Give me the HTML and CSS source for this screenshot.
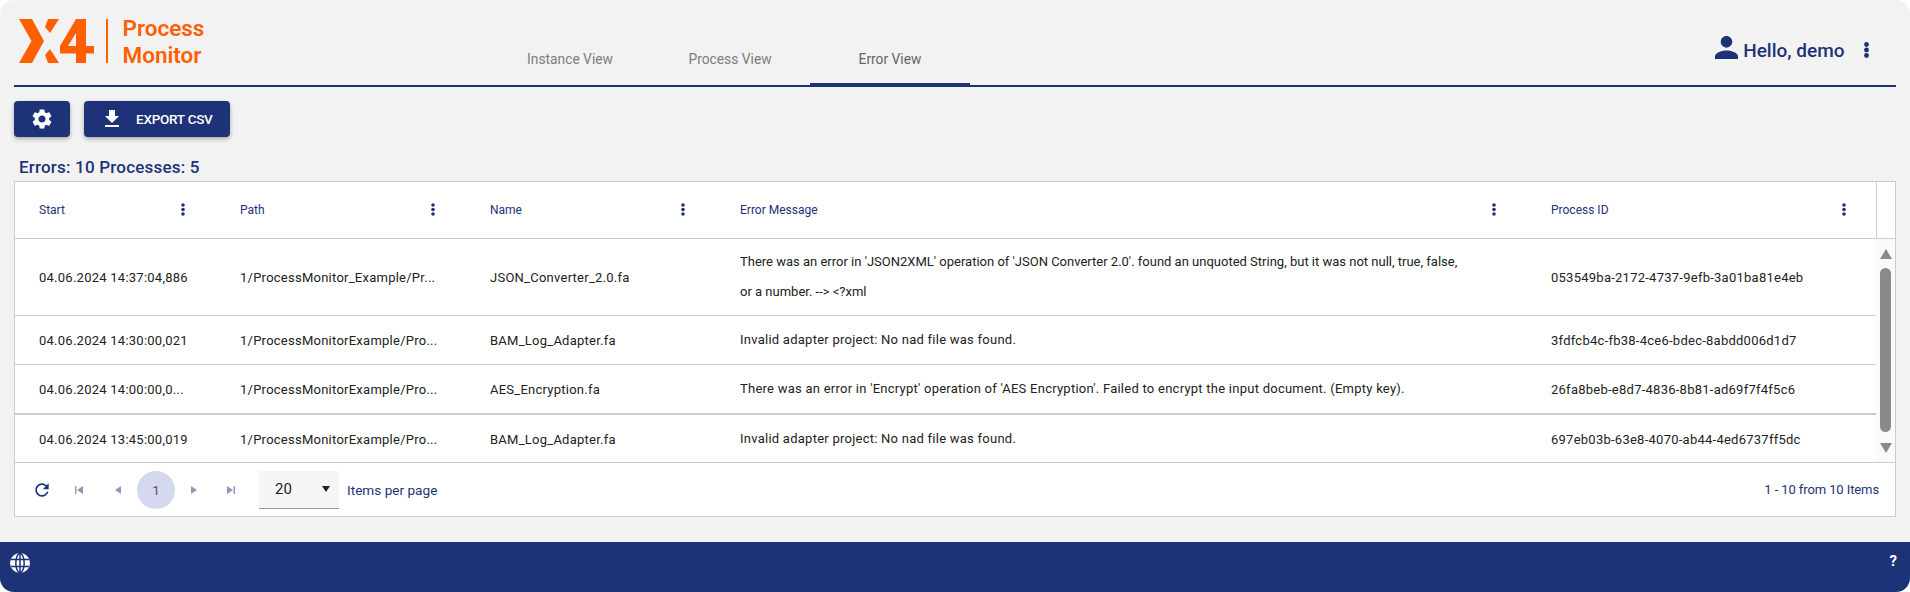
FILE: index.html
```html
<!DOCTYPE html>
<html lang="en">
<head>
<meta charset="utf-8">
<title>Process Monitor</title>
<link rel="stylesheet" href="styles.css">
</head>
<body>
<svg class="defs" width="0" height="0" aria-hidden="true">
  <symbol id="kebab" viewBox="0 0 4 13"><circle cx="2" cy="2" r="1.800"/><circle cx="2" cy="6.500" r="1.800"/><circle cx="2" cy="11" r="1.800"/></symbol>
  <symbol id="kebab-lg" viewBox="0 0 5 16"><circle cx="2.500" cy="2.500" r="2.400"/><circle cx="2.500" cy="8" r="2.400"/><circle cx="2.500" cy="13.500" r="2.400"/></symbol>
</svg>
<div class="app">
  <main class="content">
    <header class="topbar">
      <div class="brand">
        <svg class="logo" viewBox="0 0 76 44" aria-label="X4">
          <path d="M0 0H13L25 22 13 44H0L12.500 22Z"/>
          <path d="M29 0H40L31 14 26 8ZM26 36 31 30 40 44H29Z"/>
          <path d="M57 0H67V27H75V34.500H67V44H57V34.500H41V27ZM57 14 49 27H57Z" fill-rule="evenodd"/>
        </svg>
        <span class="brand-rule"></span>
        <div class="brand-name"><span>Process</span><span>Monitor</span></div>
      </div>
      <nav class="tabs">
        <a class="tab">Instance View</a>
        <a class="tab">Process View</a>
        <a class="tab active">Error View</a>
      </nav>
      <div class="user">
        <svg class="user-icon" viewBox="4 4 16 16"><path d="M12 12c2.210 0 4-1.790 4-4s-1.790-4-4-4-4 1.790-4 4 1.790 4 4 4zm0 2c-2.670 0-8 1.340-8 4v2h16v-2c0-2.660-5.330-4-8-4z"/></svg>
        <span class="user-name">Hello, demo</span>
        <svg class="kebab-lg"><use href="#kebab-lg"/></svg>
      </div>
    </header>

    <div class="toolbar">
      <button class="btn btn-icon">
        <svg viewBox="0 0 24 24"><path d="M19.140 12.940c.04-.3.06-.61.06-.94 0-.32-.02-.64-.07-.94l2.030-1.580c.18-.14.23-.41.12-.61l-1.920-3.320c-.12-.22-.37-.29-.59-.22l-2.390.96c-.5-.38-1.030-.7-1.620-.94l-.36-2.540c-.04-.24-.24-.41-.48-.41h-3.840c-.24 0-.43.17-.47.41l-.36 2.540c-.59.24-1.130.57-1.620.94l-2.390-.96c-.22-.08-.47 0-.59.22L2.740 8.870c-.12.21-.08.47.12.61l2.030 1.580c-.05.3-.09.63-.09.94s.02.64.07.94l-2.030 1.580c-.18.14-.23.41-.12.61l1.920 3.320c.12.22.37.29.59.22l2.390-.96c.5.38 1.030.7 1.620.94l.36 2.540c.05.24.24.41.48.41h3.840c.24 0 .44-.17.47-.41l.36-2.540c.59-.24 1.130-.56 1.620-.94l2.390.96c.22.08.47 0 .59-.22l1.920-3.320c.12-.22.07-.47-.12-.61l-2.010-1.580zM12 15.600c-1.980 0-3.600-1.620-3.600-3.600s1.620-3.600 3.600-3.600 3.600 1.620 3.600 3.600-1.620 3.600-3.600 3.600z"/></svg>
      </button>
      <button class="btn btn-export">
        <svg viewBox="0 0 24 24"><path d="M19 9h-4V3H9v6H5l7 7 7-7zM5 18v2h14v-2H5z"/></svg>
        <span>EXPORT CSV</span>
      </button>
    </div>

    <div class="summary">Errors: 10 Processes: 5</div>

    <section class="grid">
      <div class="grid-head">
        <div class="row head-row">
          <div class="cell"><span>Start</span><svg class="kebab"><use href="#kebab"/></svg></div>
          <div class="cell"><span>Path</span><svg class="kebab"><use href="#kebab"/></svg></div>
          <div class="cell"><span>Name</span><svg class="kebab"><use href="#kebab"/></svg></div>
          <div class="cell"><span>Error Message</span><svg class="kebab"><use href="#kebab"/></svg></div>
          <div class="cell"><span>Process ID</span><svg class="kebab"><use href="#kebab"/></svg></div>
        </div>
        <div class="gutter"></div>
      </div>
      <div class="grid-body">
        <div class="rows">
          <div class="row data-row r1">
            <div class="cell"><span class="clip">04.06.2024 14:37:04,886</span></div>
            <div class="cell"><span class="clip">1/ProcessMonitor_Example/Pr...</span></div>
            <div class="cell"><span class="clip">JSON_Converter_2.0.fa</span></div>
            <div class="cell msg">There was an error in 'JSON2XML' operation of 'JSON Converter 2.0'. found an unquoted String, but it was not null, true, false,<br>or a number. --&gt; &lt;?xml</div>
            <div class="cell"><span class="clip">053549ba-2172-4737-9efb-3a01ba81e4eb</span></div>
          </div>
          <div class="row data-row r2">
            <div class="cell"><span class="clip">04.06.2024 14:30:00,021</span></div>
            <div class="cell"><span class="clip">1/ProcessMonitorExample/Pro...</span></div>
            <div class="cell"><span class="clip">BAM_Log_Adapter.fa</span></div>
            <div class="cell msg">Invalid adapter project: No nad file was found.</div>
            <div class="cell"><span class="clip">3fdfcb4c-fb38-4ce6-bdec-8abdd006d1d7</span></div>
          </div>
          <div class="row data-row r3">
            <div class="cell"><span class="clip">04.06.2024 14:00:00,0...</span></div>
            <div class="cell"><span class="clip">1/ProcessMonitorExample/Pro...</span></div>
            <div class="cell"><span class="clip">AES_Encryption.fa</span></div>
            <div class="cell msg">There was an error in 'Encrypt' operation of 'AES Encryption'. Failed to encrypt the input document. (Empty key).</div>
            <div class="cell"><span class="clip">26fa8beb-e8d7-4836-8b81-ad69f7f4f5c6</span></div>
          </div>
          <div class="row data-row r4">
            <div class="cell"><span class="clip">04.06.2024 13:45:00,019</span></div>
            <div class="cell"><span class="clip">1/ProcessMonitorExample/Pro...</span></div>
            <div class="cell"><span class="clip">BAM_Log_Adapter.fa</span></div>
            <div class="cell msg">Invalid adapter project: No nad file was found.</div>
            <div class="cell"><span class="clip">697eb03b-63e8-4070-ab44-4ed6737ff5dc</span></div>
          </div>
        </div>
        <div class="scrollbar">
          <span class="arrow-up"></span>
          <span class="thumb"></span>
          <span class="arrow-down"></span>
        </div>
      </div>
      <div class="pager">
        <svg class="refresh" viewBox="0 0 24 24"><path d="M17.650 6.350C16.200 4.900 14.210 4 12 4c-4.420 0-7.990 3.580-7.990 8s3.570 8 7.990 8c3.730 0 6.840-2.550 7.730-6h-2.080c-.82 2.330-3.040 4-5.650 4-3.310 0-6-2.690-6-6s2.690-6 6-6c1.660 0 3.140.69 4.220 1.780L13 11h7V4l-2.350 2.350z"/></svg>
        <svg class="nav" viewBox="0 0 8 8"><path d="M0 0H1.400V8H0ZM8 0V8L2 4Z"/></svg>
        <svg class="nav" viewBox="0 0 8 8"><path d="M7 0V8L1 4Z"/></svg>
        <span class="page">1</span>
        <svg class="nav" viewBox="0 0 8 8"><path d="M1 0V8L7 4Z"/></svg>
        <svg class="nav" viewBox="0 0 8 8"><path d="M0 0V8L6 4ZM6.600 0H8V8H6.600Z"/></svg>
        <div class="select"><span>20</span><i class="caret"></i></div>
        <span class="per-page">Items per page</span>
        <span class="count">1 - 10 from 10 Items</span>
      </div>
    </section>
  </main>
  <footer class="footer">
    <svg class="globe" viewBox="0 0 20 20"><circle cx="10" cy="10" r="10" fill="#fff"/><g fill="none" stroke="#1e3278" stroke-width="1.500"><ellipse cx="10" cy="10" rx="4.200" ry="9.500"/><path d="M10 0V20M1 6.500H19M1 13.500H19"/></g></svg>
    <span class="help">?</span>
  </footer>
</div>
</body>
</html>
```
FILE: styles.css
```css
* { box-sizing: border-box; }
html, body { margin: 0; height: 100%; background: #fff; overflow: hidden; }
body { font-family: Roboto, "Liberation Sans", sans-serif; color: #1e3278; }
.defs { position: absolute; }

.app {
  height: 592px;
  display: flex;
  flex-direction: column;
  background: #f2f2f2;
  border-radius: 14px;
  overflow: hidden;
}
.content { flex: 1; min-height: 0; padding: 0 14px; }

/* top bar */
.topbar {
  height: 87px;
  display: flex;
  border-bottom: 2px solid #1e3278;
  position: relative;
}
.brand { width: 476px; display: flex; align-items: flex-start; padding: 19px 0 0 5px; }
.logo { width: 76px; height: 44px; fill: #ff5f00; }
.brand-rule { width: 1.500px; height: 44px; margin-left: 11px; background: #ff5f00; }
.brand-name {
  display: flex;
  flex-direction: column;
  margin: -4px 0 0 15px;
  color: #ff5f00;
  font-size: 22.500px;
  font-weight: 600;
  line-height: 27px;
}
.tabs { display: flex; height: 87px; }
.tab {
  width: 160px;
  height: 87px;
  padding-top: 50px;
  text-align: center;
  color: #7d7d7d;
  font-size: 13.800px;
  line-height: 18px;
  border-bottom: 4px solid transparent;
}
.tab.active { color: #666; border-bottom-color: #1e3278; }
.user {
  margin-left: auto;
  display: flex;
  align-items: center;
  height: 40px;
  margin-top: 30px;
  padding-right: 27.500px;
}
.user-icon { width: 23px; height: 23px; fill: #1e3278; margin: -5px 6px 0 0; }
.user-name { font-size: 19px; font-weight: 500; white-space: nowrap; margin-left: -1px; }
.kebab-lg { width: 5px; height: 16px; fill: #1e3278; margin-left: 19px; }

/* toolbar */
.toolbar { display: flex; gap: 14px; padding-top: 14px; }
.btn {
  height: 36px;
  border: 0;
  border-radius: 4px;
  background: #1e3278;
  color: #fff;
  display: flex;
  align-items: center;
  justify-content: center;
  font-family: inherit;
  box-shadow: 0 2px 4px rgba(0, 0, 0, .3);
  padding: 0;
}
.btn svg { fill: #fff; }
.btn-icon { width: 56px; }
.btn-icon svg { width: 24px; height: 24px; }
.btn-export { width: 146px; justify-content: flex-start; padding-left: 16px; font-size: 13.500px; font-weight: 500; gap: 12px; letter-spacing: -.25px; }
.btn-export svg { width: 24px; height: 24px; }

.summary {
  margin: 20px 0 0 5px;
  height: 24px;
  font-size: 17px;
  font-weight: 500;
  line-height: 20px;
  letter-spacing: .2px;
}

/* data grid */
.grid { height: 336px; background: #fff; border: 1px solid #ccc; font-size: 13px; color: #222; }
.grid-head { display: flex; height: 57px; border-bottom: 1px solid #ccc; }
.gutter { width: 20px; border-left: 1px solid #ccc; }
.row { display: grid; grid-template-columns: 201px 249px 250px 811px 350px; width: 1861px; }
.cell { padding: 0 25px; display: flex; align-items: center; min-width: 0; }
.cell:nth-child(-n+2) { padding-left: 24px; }
.head-row .cell { justify-content: space-between; color: #1e3278; font-size: 12px; font-weight: 400; padding-right: 30px; }
.head-row .cell:first-child { padding-right: 31px; }
.kebab { width: 4px; height: 13px; fill: #1e3278; margin-top: -2px; }
.grid-body { display: flex; height: 224px; border-bottom: 1px solid #ccc; }
.rows { width: 1861px; }
.data-row { border-bottom: 1px solid #ccc; }
.data-row:last-child { border-bottom: 0; }
.r1 { height: 77px; }
.r2 { height: 49px; }
.r3 { height: 50px; border-bottom-width: 2px; }
.r4 { height: 48px; }
.clip { white-space: nowrap; letter-spacing: .25px; }
.msg { display: block; align-self: center; line-height: 30px; white-space: nowrap; letter-spacing: .25px; }
.r1 .msg { letter-spacing: 0; }
.scrollbar {
  width: 19px;
  background: #fafafa;
  display: flex;
  flex-direction: column;
  align-items: center;
  padding-top: 10px;
}
.arrow-up, .arrow-down { width: 0; height: 0; border-left: 6.500px solid transparent; border-right: 6.500px solid transparent; }
.arrow-up { border-bottom: 10px solid #8a8a8a; }
.arrow-down { border-top: 10px solid #8a8a8a; }
.thumb { width: 11px; height: 164px; margin: 9px 0 11px; border-radius: 6px; background: #8a8a8a; }

/* pager */
.pager { height: 53px; display: flex; align-items: center; padding-left: 17px; color: #1e3278; font-size: 13.600px; }
.refresh { width: 20px; height: 20px; fill: #1e3278; margin-right: 23px; }
.nav { width: 8px; height: 8px; fill: #8f98bb; margin-right: 31px; }
.nav:nth-of-type(3) { margin-right: 15px; }
.nav:nth-of-type(4) { margin-right: 29px; }
.nav:last-of-type { margin-right: 24px; }
.page {
  width: 38px;
  height: 38px;
  margin-right: 15px;
  border-radius: 50%;
  background: #d5d9f0;
  text-align: center;
  line-height: 38px;
  color: #5a4a80;
}
.select {
  width: 80px;
  height: 38px;
  padding: 0 9px 0 16px;
  display: flex;
  align-items: center;
  justify-content: space-between;
  background: #f5f5f5;
  border-bottom: 1px solid #999;
  color: #222;
  font-size: 15px;
}
.caret { width: 0; height: 0; border-left: 4px solid transparent; border-right: 4px solid transparent; border-top: 6px solid #222; }
.per-page { margin-left: 8px; }
.count { margin-left: auto; padding-right: 16px; font-size: 13px; letter-spacing: -.1px; }

/* footer */
.footer {
  height: 50px;
  flex: none;
  background: #1e3278;
  color: #fff;
  display: flex;
  justify-content: space-between;
  padding: 10px 13px 0 10px;
}
.globe { width: 20px; height: 20px; margin-top: 1px; }
.help { font-size: 15px; font-weight: 700; line-height: 18px; }
```
